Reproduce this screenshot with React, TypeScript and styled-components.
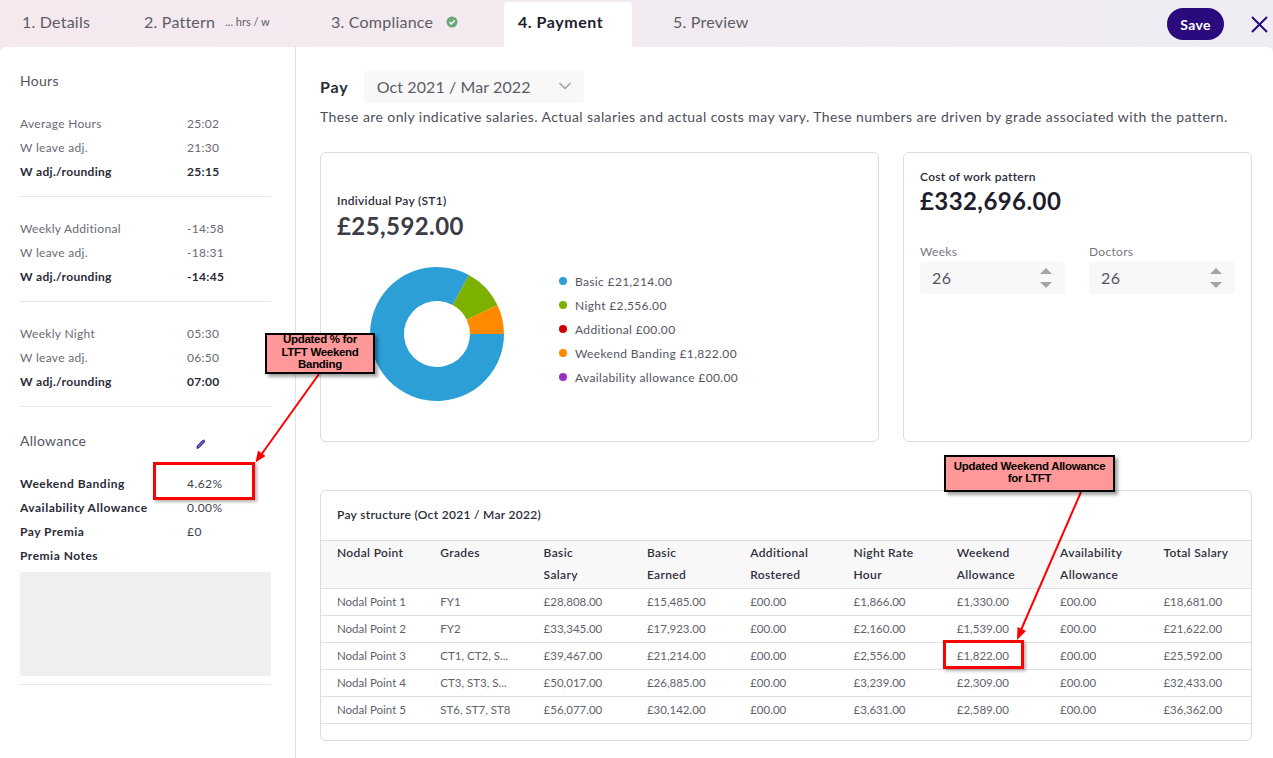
import React from 'react'
import styled, { createGlobalStyle } from 'styled-components'

const GlobalStyle = createGlobalStyle`
  html, body {
    margin: 0;
    padding: 0;
    background: #ffffff;
  }
  body {
    font-family: Lato, "Noto Sans", sans-serif;
    color: #4a4a55;
    overflow: hidden;
  }
  * {
    box-sizing: border-box;
  }
`

const Page = styled.div`
  position: relative;
  width: 1273px;
  height: 758px;
  overflow: hidden;
  display: flex;
  flex-direction: column;
  background: linear-gradient(90deg, #f5e9ee 0%, #efecf3 100%);
`

const TabBar = styled.div`
  height: 47px;
  flex: none;
  display: flex;
  align-items: flex-end;
  padding-left: 8px;
`

const Tab = styled.div<{ $width: number; $active?: boolean; $inset?: number }>`
  width: ${(p) => p.$width}px;
  height: 45px;
  display: flex;
  align-items: center;
  padding: 0 0 7px ${(p) => p.$inset ?? 14}px;
  font-size: 16px;
  letter-spacing: ${(p) => (p.$active ? '0.55px' : '0.22px')};
  color: ${(p) => (p.$active ? '#1d1d2b' : '#5c5c66')};
  font-weight: ${(p) => (p.$active ? 700 : 400)};
  background: ${(p) => (p.$active ? '#ffffff' : 'transparent')};
  border-radius: 4px 4px 0 0;
`

const TabHint = styled.span`
  margin-left: 10px;
  font-size: 11px;
  letter-spacing: 0;
`

const CheckBadge = styled.span`
  width: 12px;
  height: 12px;
  margin: 1px 0 0 13px;
  display: inline-flex;
  svg {
    display: block;
  }
`

const BarActions = styled.div`
  margin-left: auto;
  height: 47px;
  display: flex;
  align-items: flex-start;
  padding: 8px 5px 0 0;
  gap: 27px;
`

const SaveButton = styled.button`
  width: 57px;
  height: 32px;
  border: 0;
  border-radius: 16px;
  background: #2a0a7c;
  color: #ffffff;
  font: 700 14px Lato, sans-serif;
  letter-spacing: 0.3px;
`

const CloseButton = styled.span`
  width: 17px;
  height: 17px;
  margin-top: 8px;
  color: #2a0a7c;
  svg {
    display: block;
  }
`

const Sheet = styled.div`
  flex: 1;
  display: flex;
  background: #ffffff;
  border-radius: 6px 6px 0 0;
  min-height: 0;
`

const Sidebar = styled.aside`
  width: 296px;
  flex: none;
  border-right: 1px solid #e2e2e4;
  padding: 0 24px 0 20px;
`

const SideTitle = styled.div`
  height: 20px;
  line-height: 20px;
  font-size: 14px;
  letter-spacing: 0.3px;
  color: #55555f;
`

const HoursTitle = styled(SideTitle)`
  margin-top: 24px;
  margin-bottom: 20px;
`

const AllowanceHead = styled.div`
  position: relative;
  margin-top: 24px;
  margin-bottom: 20px;
  display: flex;
  align-items: center;
`

const PencilIcon = styled.span`
  position: absolute;
  left: 175px;
  top: 7px;
  width: 12px;
  height: 12px;
  svg {
    display: block;
  }
`

const SideGroup = styled.div`
  padding-bottom: 13px;
  border-bottom: 1px solid #e6e6e8;
  & + & {
    padding-top: 19px;
  }
`

const SideRow = styled.div<{ $strong?: boolean }>`
  height: 24px;
  display: grid;
  grid-template-columns: 167px 1fr;
  align-items: center;
  font-size: 12px;
  letter-spacing: 0.3px;
  color: ${(p) => (p.$strong ? '#2b2b38' : '#6a6a74')};
  font-weight: ${(p) => (p.$strong ? 700 : 400)};
`

const AllowanceLabel = styled.span`
  color: #2b2b38;
  font-weight: 700;
  letter-spacing: 0.5px;
`

const AllowanceValue = styled.span`
  color: #3d3d48;
  letter-spacing: 0.45px;
`

const NotesBox = styled.div`
  height: 104px;
  margin-top: 5px;
  background: #efefef;
  border-radius: 3px;
`

const NotesGroup = styled.div`
  padding-bottom: 8px;
  border-bottom: 1px solid #e6e6e8;
`

const Main = styled.main`
  flex: 1;
  min-width: 0;
  padding: 24px 21px 0 24px;
`

const PayRow = styled.div`
  height: 32px;
  display: flex;
  align-items: center;
  gap: 15px;
`

const PayLabel = styled.span`
  font-size: 16px;
  font-weight: 700;
  letter-spacing: 0.9px;
  color: #2b2b38;
  margin-bottom: 2px;
`

const PeriodSelect = styled.div`
  width: 220px;
  height: 32px;
  background: #f8f8f8;
  border-radius: 3px;
  display: flex;
  align-items: center;
  justify-content: space-between;
  padding: 0 12px 2px 13px;
  font-size: 16px;
  letter-spacing: 0.1px;
  color: #5c5c66;
`

const Notice = styled.p`
  margin: 5px 0 0;
  height: 18px;
  line-height: 18px;
  font-size: 14px;
  letter-spacing: 0.415px;
  color: #4e4e5a;
  white-space: nowrap;
`

const CardRow = styled.div`
  margin-top: 26px;
  display: grid;
  grid-template-columns: 559px 349px;
  gap: 24px;
`

const Card = styled.section`
  height: 290px;
  border: 1px solid #dcdcdc;
  border-radius: 6px;
  padding: 0 16px;
`

const PayCard = styled(Card)`
  padding-top: 40px;
`

const CostCard = styled(Card)`
  padding-top: 16px;
`

const CardLabel = styled.div`
  height: 16px;
  line-height: 16px;
  font-size: 12px;
  font-weight: 600;
  letter-spacing: 0.3px;
  color: #2b2b38;
`

const Amount = styled.div<{ $dark?: boolean }>`
  margin-top: ${(p) => (p.$dark ? 0 : 1)}px;
  height: 32px;
  line-height: 32px;
  font-size: 24px;
  font-weight: 700;
  letter-spacing: 0.42px;
  color: ${(p) => (p.$dark ? '#1d1d2b' : '#3c3c46')};
`

const ChartRow = styled.div`
  margin-top: 22px;
  display: flex;
  align-items: center;
  padding-left: 30px;
`

const Legend = styled.ul`
  list-style: none;
  margin: 0 0 10px 52px;
  padding: 0;
`

const LegendItem = styled.li`
  height: 24px;
  display: flex;
  align-items: center;
  font-size: 12px;
  letter-spacing: 0.35px;
  color: #55555f;
`

const LegendDot = styled.span<{ $color: string }>`
  width: 8px;
  height: 8px;
  margin-right: 8px;
  border-radius: 50%;
  background: ${(p) => p.$color};
`

const StepperRow = styled.div`
  margin-top: 26px;
  display: grid;
  grid-template-columns: 145px 146px;
  gap: 24px;
`

const StepperLabel = styled.div`
  height: 19px;
  line-height: 18px;
  font-size: 12px;
  letter-spacing: 0.3px;
  color: #777780;
`

const Stepper = styled.div`
  height: 32px;
  background: #f8f8f8;
  border-radius: 3px;
  display: flex;
  align-items: center;
  justify-content: space-between;
  padding: 0 13px 0 12px;
  font-size: 16px;
  letter-spacing: 0.5px;
  color: #55555f;
`

const StepperValue = styled.span`
  margin-bottom: 2px;
`

const StepperArrows = styled.span`
  display: flex;
  flex-direction: column;
  gap: 8px;
`

const ArrowUp = styled.span`
  width: 0;
  height: 0;
  border-left: 6px solid transparent;
  border-right: 6px solid transparent;
  border-bottom: 6px solid #a3a3a8;
`

const ArrowDown = styled(ArrowUp)`
  border-bottom: 0;
  border-top: 6px solid #a3a3a8;
`

const TableCard = styled.section`
  margin-top: 48px;
  width: 932px;
  height: 251px;
  border: 1px solid #dcdcdc;
  border-radius: 6px;
  overflow: hidden;
`

const TableTitle = styled.div`
  height: 49px;
  line-height: 48px;
  padding-left: 16px;
  font-size: 12px;
  font-weight: 600;
  letter-spacing: 0.3px;
  color: #2b2b38;
`

const TableGrid = styled.div`
  display: grid;
  grid-template-columns: repeat(8, 103.3px) 1fr;
  padding-left: 16px;
  width: 100%;
`

const HeadRow = styled(TableGrid)`
  height: 49px;
  background: #f8f8f8;
  border-top: 1px solid #dedede;
  border-bottom: 1px solid #dedede;
`

const HeadCell = styled.div`
  font-size: 12px;
  line-height: 22px;
  padding-top: 1px;
  font-weight: 600;
  letter-spacing: 0.35px;
  color: #2f2f3c;
`

const BodyRow = styled(TableGrid)`
  height: 27px;
  align-items: center;
  padding-bottom: 2px;
  border-bottom: 1px solid #e0e0e0;
`

const BodyCell = styled.div`
  font-size: 11.5px;
  letter-spacing: 0;
  color: #62626c;
  white-space: nowrap;
`

const Callout = styled.div<{ $x: number; $y: number; $w: number; $h: number }>`
  position: absolute;
  left: ${(p) => p.$x}px;
  top: ${(p) => p.$y}px;
  width: ${(p) => p.$w}px;
  height: ${(p) => p.$h}px;
  background: #ff9999;
  border: 2px solid #000000;
  box-shadow: 3px 3px 3px rgba(0, 0, 0, 0.35);
  display: flex;
  align-items: center;
  justify-content: center;
  padding-bottom: 3px;
  text-align: center;
  font: 700 11.5px/12.5px "Liberation Sans", Arial, sans-serif;
  letter-spacing: -0.3px;
  color: #000000;
`

const Highlight = styled.div<{ $x: number; $y: number; $w: number; $h: number }>`
  position: absolute;
  left: ${(p) => p.$x}px;
  top: ${(p) => p.$y}px;
  width: ${(p) => p.$w}px;
  height: ${(p) => p.$h}px;
  border: 3px solid #ff0000;
  box-shadow: 2px 2px 3px rgba(0, 0, 0, 0.3);
`

const ArrowLayer = styled.svg`
  position: absolute;
  left: 0;
  top: 0;
  pointer-events: none;
`

const slices = [
  { color: '#2b9fd6', value: 21214 },
  { color: '#7cb100', value: 2556 },
  { color: '#ff8a00', value: 1822 },
]

const point = (r: number, a: number) => `${70 + r * Math.cos(a)} ${70 + r * Math.sin(a)}`

const Donut = () => {
  const total = slices.reduce((sum, s) => sum + s.value, 0)
  let angle = 0
  return (
    <svg width="140" height="140" viewBox="0 0 140 140">
      {slices.map((s) => {
        const start = angle
        angle += (s.value / total) * Math.PI * 2
        const large = angle - start > Math.PI ? 1 : 0
        const d = `M${point(67, start)}A67 67 0 ${large} 1 ${point(67, angle)}L${point(33, angle)}A33 33 0 ${large} 0 ${point(33, start)}Z`
        return <path key={s.color} d={d} fill={s.color} />
      })}
    </svg>
  )
}

const hoursGroups = [
  [
    ['Average Hours', '25:02'],
    ['W leave adj.', '21:30'],
    ['W adj./rounding', '25:15'],
  ],
  [
    ['Weekly Additional', '-14:58'],
    ['W leave adj.', '-18:31'],
    ['W adj./rounding', '-14:45'],
  ],
  [
    ['Weekly Night', '05:30'],
    ['W leave adj.', '06:50'],
    ['W adj./rounding', '07:00'],
  ],
]

const allowances = [
  ['Weekend Banding', '4.62%'],
  ['Availability Allowance', '0.00%'],
  ['Pay Premia', '£0'],
]

const legend = [
  ['#2b9fd6', 'Basic £21,214.00'],
  ['#7cb100', 'Night £2,556.00'],
  ['#cc0000', 'Additional £00.00'],
  ['#ff8a00', 'Weekend Banding £1,822.00'],
  ['#9b30c8', 'Availability allowance £00.00'],
]

const headers = [
  ['Nodal Point'],
  ['Grades'],
  ['Basic', 'Salary'],
  ['Basic', 'Earned'],
  ['Additional', 'Rostered'],
  ['Night Rate', 'Hour'],
  ['Weekend', 'Allowance'],
  ['Availability', 'Allowance'],
  ['Total Salary'],
]

const rows = [
  ['Nodal Point 1', 'FY1', '£28,808.00', '£15,485.00', '£00.00', '£1,866.00', '£1,330.00', '£00.00', '£18,681.00'],
  ['Nodal Point 2', 'FY2', '£33,345.00', '£17,923.00', '£00.00', '£2,160.00', '£1,539.00', '£00.00', '£21,622.00'],
  ['Nodal Point 3', 'CT1, CT2, S...', '£39,467.00', '£21,214.00', '£00.00', '£2,556.00', '£1,822.00', '£00.00', '£25,592.00'],
  ['Nodal Point 4', 'CT3, ST3, S...', '£50,017.00', '£26,885.00', '£00.00', '£3,239.00', '£2,309.00', '£00.00', '£32,433.00'],
  ['Nodal Point 5', 'ST6, ST7, ST8', '£56,077.00', '£30,142.00', '£00.00', '£3,631.00', '£2,589.00', '£00.00', '£36,362.00'],
]

export default function App() {
  return (
    <Page>
      <GlobalStyle />
      <TabBar>
        <Tab $width={122}>1. Details</Tab>
        <Tab $width={187}>
          2. Pattern<TabHint>... hrs / w</TabHint>
        </Tab>
        <Tab $width={187}>
          3. Compliance
          <CheckBadge>
            <svg width="12" height="12" viewBox="0 0 12 12">
              <circle cx="6" cy="6" r="5.5" fill="#6aa878" />
              <path d="M3.4 6.1l1.8 1.8 3.4-3.5" fill="none" stroke="#fff" strokeWidth="1.4" />
            </svg>
          </CheckBadge>
        </Tab>
        <Tab $width={128} $active>
          4. Payment
        </Tab>
        <Tab $width={140} $inset={41}>
          5. Preview
        </Tab>
        <BarActions>
          <SaveButton>Save</SaveButton>
          <CloseButton>
            <svg width="17" height="17" viewBox="0 0 17 17">
              <path d="M1 1l15 15M16 1L1 16" stroke="currentColor" strokeWidth="2" fill="none" />
            </svg>
          </CloseButton>
        </BarActions>
      </TabBar>
      <Sheet>
        <Sidebar>
          <HoursTitle>Hours</HoursTitle>
          {hoursGroups.map((group, i) => (
            <SideGroup key={i}>
              {group.map(([label, value], j) => (
                <SideRow key={j} $strong={j === 2}>
                  <span>{label}</span>
                  <span>{value}</span>
                </SideRow>
              ))}
            </SideGroup>
          ))}
          <AllowanceHead>
            <SideTitle>Allowance</SideTitle>
            <PencilIcon>
              <svg width="12" height="12" viewBox="0 0 12 12">
                <path d="M2 10.4l.5-2.6 5-5.2c.6-.6 1.3-.6 1.8-.1s.5 1.2 0 1.7l-5 5.2z" fill="#6f6ac8" stroke="#2a0a7c" strokeWidth="1" />
              </svg>
            </PencilIcon>
          </AllowanceHead>
          <NotesGroup>
            {allowances.map(([label, value]) => (
              <SideRow key={label}>
                <AllowanceLabel>{label}</AllowanceLabel>
                <AllowanceValue>{value}</AllowanceValue>
              </SideRow>
            ))}
            <SideRow>
              <AllowanceLabel>Premia Notes</AllowanceLabel>
            </SideRow>
            <NotesBox />
          </NotesGroup>
        </Sidebar>
        <Main>
          <PayRow>
            <PayLabel>Pay</PayLabel>
            <PeriodSelect>
              Oct 2021 / Mar 2022
              <svg width="14" height="8" viewBox="0 0 14 8">
                <path d="M1.5 1l5.5 5.5L12.5 1" fill="none" stroke="#9a9aa0" strokeWidth="1.3" />
              </svg>
            </PeriodSelect>
          </PayRow>
          <Notice>
            These are only indicative salaries. Actual salaries and actual costs may vary. These numbers are driven by grade associated with the pattern.
          </Notice>
          <CardRow>
            <PayCard>
              <CardLabel>Individual Pay (ST1)</CardLabel>
              <Amount>£25,592.00</Amount>
              <ChartRow>
                <Donut />
                <Legend>
                  {legend.map(([color, text]) => (
                    <LegendItem key={text}>
                      <LegendDot $color={color} />
                      {text}
                    </LegendItem>
                  ))}
                </Legend>
              </ChartRow>
            </PayCard>
            <CostCard>
              <CardLabel>Cost of work pattern</CardLabel>
              <Amount $dark>£332,696.00</Amount>
              <StepperRow>
                {['Weeks', 'Doctors'].map((label) => (
                  <div key={label}>
                    <StepperLabel>{label}</StepperLabel>
                    <Stepper>
                      <StepperValue>26</StepperValue>
                      <StepperArrows>
                        <ArrowUp />
                        <ArrowDown />
                      </StepperArrows>
                    </Stepper>
                  </div>
                ))}
              </StepperRow>
            </CostCard>
          </CardRow>
          <TableCard>
            <TableTitle>Pay structure (Oct 2021 / Mar 2022)</TableTitle>
            <HeadRow>
              {headers.map((lines) => (
                <HeadCell key={lines.join()}>
                  {lines.map((line) => (
                    <div key={line}>{line}</div>
                  ))}
                </HeadCell>
              ))}
            </HeadRow>
            {rows.map((row) => (
              <BodyRow key={row[0]}>
                {row.map((cell, i) => (
                  <BodyCell key={i}>{cell}</BodyCell>
                ))}
              </BodyRow>
            ))}
          </TableCard>
        </Main>
      </Sheet>

      <ArrowLayer width="1273" height="758" viewBox="0 0 1273 758">
        <path d="M319 374L261 455" stroke="#ff0000" strokeWidth="2" fill="none" />
        <path d="M255.5 462.5l2.5-12 7.5 5.5z" fill="#ff0000" />
        <path d="M1081 492L1021 630" stroke="#ff0000" strokeWidth="2" fill="none" />
        <path d="M1017 640l.5-13 8.5 4z" fill="#ff0000" />
      </ArrowLayer>
      <Callout $x={265} $y={333} $w={110} $h={41}>
        <div>
          Updated % for
          <br />
          LTFT Weekend
          <br />
          Banding
        </div>
      </Callout>
      <Callout $x={944} $y={455} $w={171} $h={37}>
        <div>
          Updated Weekend Allowance
          <br />
          for LTFT
        </div>
      </Callout>
      <Highlight $x={153} $y={462} $w={102} $h={38} />
      <Highlight $x={943} $y={640} $w={81} $h={29} />
    </Page>
  )
}
